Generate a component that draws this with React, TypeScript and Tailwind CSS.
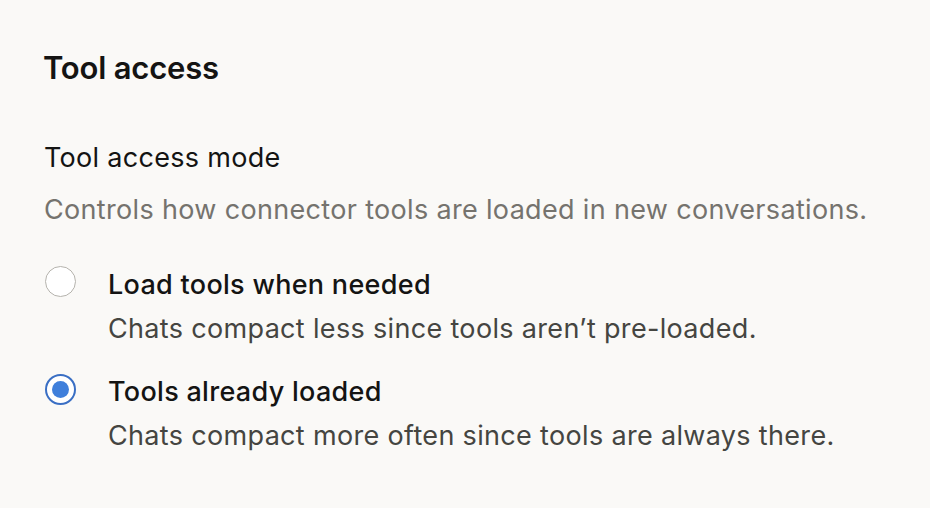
import React from "react";

const options = [
  {
    id: "on-demand",
    title: "Load tools when needed",
    desc: "Chats compact less since tools aren\u2019t pre-loaded.",
  },
  {
    id: "preloaded",
    title: "Tools already loaded",
    desc: "Chats compact more often since tools are always there.",
  },
];

const App = () => {
  const [mode, setMode] = React.useState("preloaded");

  return (
    <div
      className="min-h-screen w-full bg-[#faf9f7] px-[45px] pt-[46px] text-[#141413]"
      style={{ fontFamily: "Inter, 'Noto Sans', sans-serif" }}
    >
      <h2 className="-ml-[2px] text-[31px] font-semibold leading-[44px] tracking-[-0.2px]">
        Tool access
      </h2>

      <div className="-ml-[1px] mt-[49px]">
        <div className="text-[27px] leading-[38px] tracking-[0.3px]">Tool access mode</div>
        <p className="mt-[14px] text-[27px] leading-[38px] tracking-[0.33px] text-[#75736e]">
          Controls how connector tools are loaded in new conversations.
        </p>
      </div>

      {/* radio group */}
      <div className="mt-[37px] flex flex-col gap-[25px]">
        {options.map((o) => {
          const checked = mode === o.id;
          return (
            <label
              key={o.id}
              className="flex cursor-pointer items-start gap-[32px]"
              onClick={() => setMode(o.id)}
            >
              <span
                className={
                  checked
                    ? "mt-[1px] flex h-[31px] w-[31px] shrink-0 items-center justify-center rounded-full border-2 border-[#3a6fc4] bg-white"
                    : "mt-[0px] flex h-[31px] w-[31px] shrink-0 items-center justify-center rounded-full border border-[#b5b3ad] bg-white"
                }
              >
                {checked && (
                  <span className="h-[17px] w-[17px] rounded-full bg-[#3f7fdb]" />
                )}
              </span>
              <span className="flex flex-col">
                <span className="text-[27px] font-medium leading-[38px] tracking-[0.3px]">
                  {o.title}
                </span>
                <span className="mt-[6px] text-[27px] leading-[38px] tracking-[0.33px] text-[#454541]">
                  {o.desc}
                </span>
              </span>
            </label>
          );
        })}
      </div>
    </div>
  );
};

export default App;
